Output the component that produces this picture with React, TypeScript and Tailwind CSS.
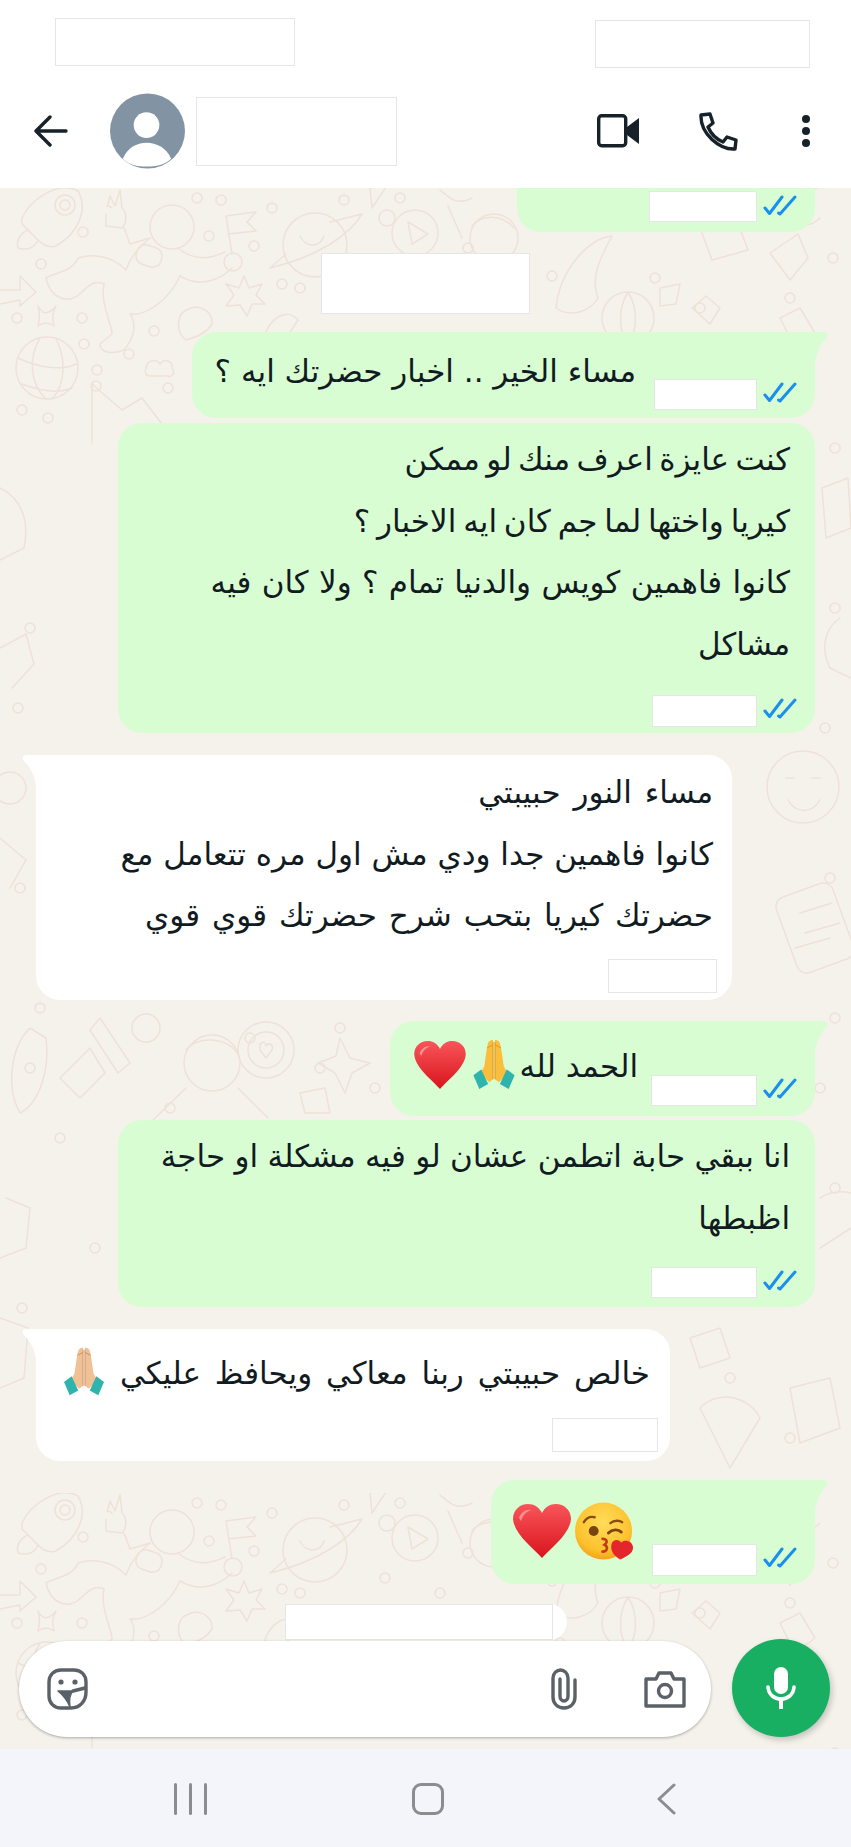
import type { ReactNode } from 'react'

function Doodles() {
  const dots = [
    [197, 10], [221, 12], [83, 44], [209, 48], [254, 58], [272, 20], [344, 12], [41, 76], [82, 130], [282, 96], [300, 100],
    [154, 143], [17, 130], [84, 156], [97, 182], [129, 166], [96, 198], [168, 200], [22, 222], [48, 230],
    [400, 10], [385, 85], [440, 100], [468, 60], [552, 88], [560, 150], [655, 90], [700, 120], [790, 110], [833, 70],
    [30, 440], [18, 520], [92, 600], [20, 700], [105, 790], [30, 880], [60, 950], [95, 1060], [22, 1120], [100, 1180],
    [835, 260], [835, 420], [825, 540], [830, 690], [835, 830], [820, 900], [835, 1000], [790, 1250], [730, 1190],
    [250, 850], [320, 880], [375, 900], [40, 820], [170, 920], [340, 840],
  ]
  return (
    <svg className="absolute inset-0 h-full w-full" aria-hidden="true">
      <defs>
        <pattern id="wall" width="851" height="1305" patternUnits="userSpaceOnUse">
          <g fill="none" stroke="#eee2d8" strokeWidth="1.5" strokeLinecap="round" strokeLinejoin="round">
            {dots.map(([x, y]) => (
              <circle key={`${x}-${y}`} cx={x} cy={y} r="5" />
            ))}
            {/* rocket */}
            <path d="M22 30C30 12 58-8 78 3C88 20 80 44 56 58C50 60 44 58 38 52L22 36Z" />
            <circle cx="65" cy="17" r="10" />
            <circle cx="65" cy="17" r="5" />
            <path d="M28 42C20 46 16 52 18 60C24 62 34 62 38 52" />
            {/* astronaut */}
            <circle cx="172" cy="39" r="22" />
            <path d="M112 20C106 14 106 26 110 8L115 18L120 2L122 20C128 26 126 36 122 40L106 38L106 26" />
            <path d="M124 40L130 56L150 50" />
            <path d="M150 50C140 58 130 70 126 82C110 66 90 66 78 70C72 84 56 84 46 90C50 110 68 118 82 104C90 96 96 92 104 96" />
            <path d="M104 96C100 116 112 136 112 146L100 156C100 166 114 166 124 162C136 148 136 134 130 126C148 128 170 110 180 88" />
            <path d="M180 88C200 100 220 92 232 80" />
            <path d="M178 60C190 70 205 74 225 64" />
            <circle cx="233" cy="74" r="9" />
            <rect x="136" y="58" width="26" height="20" rx="9" transform="rotate(18 149 68)" />
            {/* flag */}
            <path d="M232 66L226 28L256 24L247 34L256 43L228 46" />
            {/* planet */}
            <circle cx="315" cy="57" r="32" />
            <path d="M362 26L330 34M362 26C350 46 320 68 270 80L286 66M300 48C306 60 320 60 324 48" />
            {/* star face */}
            <path d="M244 88L249 100L262 96L256 107L265 116L252 116L247 128L240 117L226 118L234 107L226 96L239 100Z" />
            <path d="M182 125C198 112 214 124 212 136C206 146 194 150 186 152C178 146 176 134 182 125Z" />
            <path d="M264 150C270 128 288 120 298 132L280 160" />
            <path d="M38 118C42 126 48 128 56 118C52 126 52 130 54 138C48 134 44 134 38 138C40 130 40 124 38 118Z" />
            {/* globe */}
            <circle cx="47" cy="180" r="31" />
            <path d="M18 170C34 178 60 184 76 176M22 196C38 202 58 206 72 200M40 150C28 170 30 196 46 211M56 151C66 170 66 196 52 211" />
            <path d="M146 180C148 170 158 172 160 176C166 168 174 176 172 180C176 184 172 190 168 188H150C146 188 144 184 146 180Z" />
            <path d="M0 102L20 102L20 88L36 104L20 118L20 112L0 116" />
            <path d="M92 255L92 196L122 222L142 210L165 240" />
            {/* play button, boy face, dolphin, pumpkin, phone */}
            <circle cx="415" cy="45" r="23" />
            <path d="M408 34L428 46L412 56Z" />
            <circle cx="494" cy="50" r="24" />
            <path d="M472 38C480 28 500 24 514 40" />
            <circle cx="387" cy="30" r="8" />
            <path d="M448 18L462 50" />
            <path d="M370 0L388-4L372 20Z" />
            <path d="M440 2C450 10 456 18 472 10" />
            <path d="M556 120C560 80 590 50 612 48C600 70 590 90 598 110C590 124 570 130 556 120Z" />
            <circle cx="628" cy="130" r="26" />
            <path d="M628 104C618 120 618 142 628 156M628 104C638 120 638 142 628 156" />
            <path d="M700 40L736 30L748 62L712 72Z" />
            <path d="M770 65L798 46L808 70L790 92Z" />
            <path d="M660 100L680 96L676 116L660 118Z" />
            <path d="M800 10L825-5M785 20C800 40 810 40 820 30" />
            <path d="M692 120L706 108L720 120L710 136Z" />
            <path d="M780 130L800 120L815 145L795 160Z" />
            {/* left margin */}
            <path d="M0 300C20 310 30 330 24 360L0 372" />
            <path d="M0 460L26 446L34 476L12 500" />
            <circle cx="10" cy="600" r="16" />
            <path d="M0 650L26 672L10 700" />
            <path d="M6 1010L30 1020L26 1060L0 1070" />
            <path d="M0 1130L28 1140L24 1190L0 1200" />
            {/* right margin */}
            <circle cx="803" cy="599" r="36" />
            <path d="M786 590H794M812 590H820M788 612C796 626 812 626 820 612" />
            <rect x="785" y="700" width="60" height="80" rx="10" transform="rotate(-20 815 740)" />
            <path d="M800 725L832 715M805 745L840 735M795 760L830 750" />
            <path d="M840 430C825 440 820 460 830 480L851 490" />
            <path d="M822 300L848 290L851 340L826 350Z" />
            <path d="M820 1010C835 1000 851 1005 851 1005M820 1060L851 1040" />
            <path d="M700 1220C720 1200 750 1210 760 1230L730 1280Z" />
            <path d="M790 1200L830 1190L840 1240L800 1255Z" />
            <path d="M690 1150L720 1140L730 1170L700 1180Z" />
            {/* middle left toothbrush and person */}
            <path d="M100 830L130 875L118 885L90 842Z" />
            <circle cx="146" cy="840" r="14" />
            <circle cx="212" cy="875" r="28" />
            <path d="M186 862C196 848 226 848 238 866" />
            <path d="M186 900L150 935M238 900L268 930" />
            <circle cx="266" cy="862" r="28" />
            <circle cx="266" cy="862" r="18" />
            <path d="M260 856C264 852 266 856 266 858C268 854 274 856 272 862L266 870L260 862Z" />
            <path d="M340 850L350 870L370 875L352 885L345 905L335 885L318 875L336 868Z" />
            <path d="M30 840C10 860 6 900 20 925C40 915 50 880 46 850Z" />
            <path d="M60 890L90 860L105 885L80 910Z" />
            <path d="M300 905L325 900L330 925H305Z" />
          </g>
        </pattern>
      </defs>
      <rect width="100%" height="100%" fill="url(#wall)" />
    </svg>
  )
}

function Checks() {
  return (
    <svg width="34" height="21" viewBox="0 0 34 21" fill="none" stroke="#1a8fee" strokeWidth="3" strokeLinecap="round" strokeLinejoin="round">
      <path d="M2 13L6.500 18.500L19 2" />
      <path d="M15.500 18L17 19L32 2" />
    </svg>
  )
}

function Redacted({ className }: { className: string }) {
  return <div className={`border border-[#e6e6e6] bg-white ${className}`} />
}

function SentMeta({ box, className }: { box: string; className: string }) {
  return (
    <div className={`flex shrink-0 items-start justify-end gap-[6px] pr-[18px] ${className}`}>
      <Redacted className={box} />
      <div className="pt-[3px]">
        <Checks />
      </div>
    </div>
  )
}

function Tail({ side, fill }: { side: 'left' | 'right'; fill: string }) {
  if (side === 'right') {
    return (
      <svg className="absolute top-0 right-[-13px]" width="14" height="30" viewBox="0 0 14 30" fill={fill}>
        <path d="M0 0H9C13 0 15 3 12 6C8 11 3 18 1 30H0Z" />
      </svg>
    )
  }
  return (
    <svg className="absolute top-0 left-[-14px]" width="15" height="30" viewBox="0 0 15 30" fill={fill}>
      <path d="M15 0H5C1 0-1 3 2 6C7 11 12 18 14 30H15Z" />
    </svg>
  )
}

function Sent({ className, tail, children }: { className: string; tail?: boolean; children: ReactNode }) {
  return (
    <div className={`relative mr-[36px] flex flex-col self-end rounded-[24px] bg-[#d9fdd3] ${tail ? 'rounded-tr-none' : ''} ${className}`}>
      {tail && <Tail side="right" fill="#d9fdd3" />}
      {children}
    </div>
  )
}

function Line({ className, children }: { className?: string; children: ReactNode }) {
  return <p className={`whitespace-nowrap ${className ?? ''}`}>{children}</p>
}

function Heart({ className }: { className: string }) {
  return (
    <svg className={className} viewBox="0 0 58 54">
      <defs>
        <linearGradient id="heartFill" x1="0" y1="0" x2="0" y2="1">
          <stop offset="0" stopColor="#f8555a" />
          <stop offset="1" stopColor="#d9141c" />
        </linearGradient>
      </defs>
      <path d="M29 54C20 44 1 30 0 15C0 6 7 0 15 0C21 0 26 3 29 9C32 3 37 0 43 0C51 0 58 6 58 15C57 30 38 44 29 54Z" fill="url(#heartFill)" />
      <path d="M6 14C8 8 13 5 18 6C13 8 10 11 8 17Z" fill="#fb8f90" />
    </svg>
  )
}

function Hands({ className, skin, dark }: { className: string; skin: string; dark: string }) {
  return (
    <svg className={className} viewBox="0 0 42 52">
      <path d="M20 1C16 1 15 3 14 8L11 28L7 35L16 44L20 41Z" fill={skin} />
      <path d="M22 1C26 1 27 3 28 8L31 28L35 35L26 44L22 41Z" fill={skin} />
      <path d="M20 3V41M22 3V41M14 9L20 6M28 9L22 6" fill="none" stroke={dark} strokeWidth="1" />
      <path d="M0 37L8 31L15 46L6 51Z" fill="#2fb4ad" />
      <path d="M42 37L34 31L27 46L36 51Z" fill="#2fb4ad" />
    </svg>
  )
}

function Kiss({ className }: { className: string }) {
  return (
    <svg className={className} viewBox="0 0 60 58">
      <defs>
        <radialGradient id="kissFace" cx="0.5" cy="0.35" r="0.7">
          <stop offset="0" stopColor="#ffdc5a" />
          <stop offset="0.7" stopColor="#fdc22e" />
          <stop offset="1" stopColor="#f39a16" />
        </radialGradient>
      </defs>
      <circle cx="29" cy="29" r="29" fill="url(#kissFace)" />
      <path d="M9 20C12 15 16 14 20 15" fill="none" stroke="#8a4d10" strokeWidth="2.4" strokeLinecap="round" />
      <path d="M36 21C40 18 45 18 48 20" fill="none" stroke="#8a4d10" strokeWidth="2.4" strokeLinecap="round" />
      <circle cx="19" cy="29" r="5" fill="#7a4410" />
      <path d="M34 31C38 27 44 27 47 30" fill="none" stroke="#7a4410" strokeWidth="3" strokeLinecap="round" />
      <path d="M28 37C32 37 34 40 30 43C34 45 33 50 28 50" fill="none" stroke="#c23a18" strokeWidth="2.6" strokeLinecap="round" />
      <path d="M46 58C39 54 36 49 37 43C38 37 45 37 47 41C50 37 59 39 59 46C59 52 52 55 46 58Z" fill="#e5252c" />
    </svg>
  )
}

export default function App() {
  return (
    <div className="flex h-[1847px] w-[851px] flex-col overflow-hidden bg-white font-['DejaVu_Sans',sans-serif] text-[#111b21]">
      {/* header */}
      <header className="h-[188px] shrink-0 bg-white">
        <div className="flex justify-between pt-[18px] pr-[41px] pl-[55px]">
          <Redacted className="h-[48px] w-[240px]" />
          <Redacted className="mt-[2px] h-[48px] w-[215px]" />
        </div>
        <div className="mt-[25px] flex items-center">
          <svg className="ml-[34px]" width="34" height="34" viewBox="0 0 34 34" fill="none" stroke="#16212a" strokeWidth="3.4" strokeLinecap="round" strokeLinejoin="round">
            <path d="M32 17H3M16 3L2 17L16 31" />
          </svg>
          <svg className="ml-[42px]" width="75" height="76" viewBox="0 0 76 76">
            <circle cx="38" cy="38" r="38" fill="#8294a3" />
            <circle cx="37" cy="32" r="13" fill="#fff" />
            <path d="M13 66C18 55 27 50 37 50C47 50 57 55 62 66C56 72 47 74 37 74C27 74 19 72 13 66Z" fill="#fff" />
          </svg>
          <Redacted className="ml-[11px] h-[69px] w-[201px]" />
          <svg className="ml-[200px]" width="42" height="34" viewBox="0 0 42 34" fill="none">
            <rect x="1.7" y="1.7" width="27" height="30" rx="3" stroke="#16212a" strokeWidth="3.4" />
            <path d="M30 13L42 4V30L30 21Z" fill="#16212a" />
          </svg>
          <svg className="ml-[59px]" width="40" height="39" viewBox="0 0 40 39" fill="none" stroke="#16212a" strokeWidth="3.4" strokeLinejoin="round">
            <path d="M3 3L12 2L15 11L10 15C13 22 18 27 25 30L29 25L38 28L37 37C22 38 2 22 3 3Z" />
          </svg>
          <svg className="ml-[63px]" width="10" height="34" viewBox="0 0 10 34" fill="#16212a">
            <circle cx="5" cy="5" r="4" />
            <circle cx="5" cy="17" r="4" />
            <circle cx="5" cy="29" r="4" />
          </svg>
        </div>
      </header>

      {/* chat */}
      <main className="relative flex h-[1561px] shrink-0 flex-col bg-[#f5f1eb] text-[31px] leading-[61.5px]">
        <Doodles />

        <Sent className="h-[44px] w-[298px] rounded-t-none">
          <div className="flex justify-end gap-[6px] pt-[3px] pr-[18px]">
            <Redacted className="h-[31px] w-[108px]" />
            <div className="pt-[4px]">
              <Checks />
            </div>
          </div>
        </Sent>

        <Redacted className="relative mt-[21px] h-[61px] w-[209px] self-center" />

        <Sent tail className="mt-[18px] h-[86px] w-[623px]">
          <div className="flex h-full justify-end">
            <p dir="rtl" className="pt-[9px] pr-[18px] whitespace-nowrap">
              مساء الخير .. اخبار حضرتك ايه ؟
            </p>
            <div className="mt-auto">
              <SentMeta box="h-[31px] w-[103px]" className="pb-[8px]" />
            </div>
          </div>
        </Sent>

        <Sent className="mt-[5px] h-[310px] w-[697px]">
          <div dir="rtl" className="pt-[6px] pr-[25px]">
            <Line className="[word-spacing:-3.5px]">كنت عايزة اعرف منك لو ممكن</Line>
            <Line className="[word-spacing:-3px]">كيريا واختها لما جم كان ايه الاخبار ؟</Line>
            <Line className="[word-spacing:0.5px]">كانوا فاهمين كويس والدنيا تمام ؟ ولا كان فيه</Line>
            <Line>مشاكل</Line>
          </div>
          <div className="mt-auto">
            <SentMeta box="h-[32px] w-[105px]" className="pb-[6px]" />
          </div>
        </Sent>

        <div className="relative mt-[22px] ml-[36px] flex h-[245px] w-[696px] flex-col rounded-[24px] rounded-tl-none bg-white">
          <Tail side="left" fill="#fff" />
          <div dir="rtl" className="pt-[7px] pr-[19px]">
            <Line className="[word-spacing:3px]">مساء النور حبيبتي</Line>
            <Line>كانوا فاهمين جدا ودي مش اول مره تتعامل مع</Line>
            <Line className="[word-spacing:2px]">حضرتك كيريا بتحب شرح حضرتك قوي قوي</Line>
          </div>
          <div className="mt-auto flex justify-end pr-[15px] pb-[7px]">
            <Redacted className="h-[34px] w-[109px]" />
          </div>
        </div>

        <Sent tail className="mt-[21px] h-[95px] w-[425px]">
          <div className="flex h-full justify-end">
            <div className="flex items-start pt-[14px] pr-[13px]">
              <Heart className="mt-[6px] h-[48px] w-[54px]" />
              <Hands className="mt-[4px] ml-[6px] h-[51px] w-[42px]" skin="#fbbd3c" dark="#e0951e" />
              <p dir="rtl" className="mt-[1px] ml-[5px] whitespace-nowrap">
                الحمد لله
              </p>
            </div>
            <div className="mt-auto">
              <SentMeta box="h-[31px] w-[106px]" className="pb-[10px]" />
            </div>
          </div>
        </Sent>

        <Sent className="mt-[4px] h-[187px] w-[697px]">
          <div dir="rtl" className="pt-[6px] pr-[25px]">
            <Line className="[word-spacing:-0.5px]">انا ببقي حابة اتطمن عشان لو فيه مشكلة او حاجة</Line>
            <Line>اظبطها</Line>
          </div>
          <div className="mt-auto">
            <SentMeta box="h-[31px] w-[106px]" className="pb-[9px]" />
          </div>
        </Sent>

        <div className="relative mt-[22px] ml-[36px] flex h-[132px] w-[634px] flex-col rounded-[24px] rounded-tl-none bg-white">
          <Tail side="left" fill="#fff" />
          <div className="flex items-start justify-end pt-[14px] pr-[20px]">
            <Hands className="mt-[3px] h-[51px] w-[40px]" skin="#f0c195" dark="#c98f62" />
            <p dir="rtl" className="ml-[16px] whitespace-nowrap [word-spacing:4px]">
              خالص حبيبتي ربنا معاكي ويحافظ عليكي
            </p>
          </div>
          <div className="mt-auto flex justify-end pr-[12px] pb-[9px]">
            <Redacted className="h-[34px] w-[106px]" />
          </div>
        </div>

        <Sent tail className="mt-[19px] h-[104px] w-[324px]">
          <div className="flex h-full justify-end">
            <div className="flex items-start pt-[22px] pr-[18px]">
              <Heart className="mt-[2px] h-[54px] w-[58px]" />
              <Kiss className="ml-[4px] h-[58px] w-[59px]" />
            </div>
            <div className="mt-auto">
              <SentMeta box="h-[32px] w-[105px]" className="pb-[8px]" />
            </div>
          </div>
        </Sent>

        <div className="relative mt-[20px] ml-[285px] h-[36px] w-[282px] rounded-r-full bg-white">
          <Redacted className="h-[36px] w-[268px]" />
        </div>

        {/* input row */}
        <div className="relative mt-[-1px] flex items-end pl-[19px]">
          <div className="flex h-[96px] w-[692px] items-center rounded-full bg-white pr-[25px] pl-[28px] shadow-[0_1px_3px_rgba(0,0,0,0.3)]">
            <svg width="41" height="42" viewBox="0 0 41 42" fill="none" stroke="#5b6168" strokeWidth="3.4" strokeLinejoin="round" strokeLinecap="round">
              <path d="M14 2H27C34 2 39 7 39 14V24C39 33 33 40 24 40H14C7 40 2 35 2 28V14C2 7 7 2 14 2Z" />
              <path d="M11 23H26C22 27 22 32 23 39C20 32 16 27 11 23Z" fill="#5b6168" strokeWidth="1.5" />
              <path d="M26 23L38 20" />
              <circle cx="14" cy="14" r="2.6" fill="#5b6168" stroke="none" />
              <circle cx="28" cy="14" r="2.6" fill="#5b6168" stroke="none" />
            </svg>
            <svg className="ml-auto" width="26" height="42" viewBox="0 0 26 42" fill="none" stroke="#5b6168" strokeWidth="3.4" strokeLinecap="round">
              <path d="M24 12V29C24 36 19 40 13 40C7 40 2 36 2 29V10C2 5 6 2 9.500 2C13 2 17 5 17 10V28C17 31 15 33 13 33C11 33 9 31 9 28V11" />
            </svg>
            <svg className="ml-[67px]" width="42" height="37" viewBox="0 0 42 37" fill="none" stroke="#5b6168" strokeWidth="3.4" strokeLinejoin="round">
              <path d="M2 8H12L15 2H27L30 8H40V35H2Z" />
              <circle cx="21" cy="20" r="6.500" />
            </svg>
          </div>
          <div className="ml-[21px] flex h-[98px] w-[98px] items-center justify-center rounded-full bg-[#19af63] shadow-[2px_3px_6px_rgba(0,0,0,0.2)]">
            <svg width="30" height="42" viewBox="0 0 30 42" fill="none" stroke="#fff" strokeLinecap="round">
              <rect x="8" y="0" width="14" height="27" rx="7" fill="#fff" stroke="none" />
              <path d="M2 20C3 36 27 36 28 20" strokeWidth="3.600" />
              <path d="M15 32V41" strokeWidth="4" />
            </svg>
          </div>
        </div>
      </main>

      {/* navigation bar */}
      <nav className="flex h-[98px] shrink-0 items-start bg-[#f4f5fa] pt-[34px]">
        <div className="ml-[174px] flex gap-[12px]">
          <div className="h-[32px] w-[3px] rounded-full bg-[#8a8c90]" />
          <div className="h-[32px] w-[3px] rounded-full bg-[#8a8c90]" />
          <div className="h-[32px] w-[3px] rounded-full bg-[#8a8c90]" />
        </div>
        <div className="ml-[205px] h-[32px] w-[32px] rounded-[9px] border-[3px] border-[#8a8c90]" />
        <svg className="ml-[212px]" width="20" height="32" viewBox="0 0 20 32" fill="none" stroke="#8a8c90" strokeWidth="3" strokeLinecap="round" strokeLinejoin="round">
          <path d="M18 2L3 16L18 30" />
        </svg>
      </nav>
    </div>
  )
}
